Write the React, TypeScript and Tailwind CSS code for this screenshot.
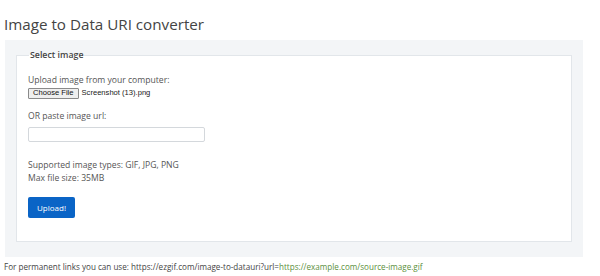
import React from "react";

export default function App() {
  return (
    <div className="w-[600px] h-[276px] bg-white overflow-hidden font-['Open_Sans',sans-serif] text-[#555]">
      <div className="pt-[14px] pl-[4px] h-[40px]">
        <h1 className="text-[15.2px] leading-[20px] text-[#444] font-normal">Image to Data URI converter</h1>
      </div>
      <div className="ml-[5px] w-[578px] bg-[#f3f5f7] pt-[9px] pb-[15px] px-[11px]">
        <fieldset className="border border-[#e2e6ea] bg-white pl-[11px] pr-[11px] pb-[23px] m-0">
          <legend className="ml-[1px] px-[1px] text-[8.8px] leading-[12px] text-[#444] font-semibold">Select image</legend>
          <div className="mt-[13px] text-[8.6px] leading-[13px]">Upload image from your computer:</div>
          <div className="h-[12px] flex items-center font-['Liberation_Sans',Arial,sans-serif] text-[7.6px] text-[#222]">
            <span className="h-[11px] px-[4px] flex items-center bg-[#efefef] border border-[#8a8a8a] rounded-[1px] text-[#111]">Choose File</span>
            <span className="ml-[3px]">Screenshot (13).png</span>
          </div>
          <div className="mt-[11px] text-[8.6px] leading-[13px]">OR paste image url:</div>
          <div className="mt-[4px] w-[177px] h-[15px] border border-[#d4d8dc] rounded-[2px]"></div>
          <div className="mt-[17px] text-[8.6px] leading-[13px]">Supported image types: GIF, JPG, PNG</div>
          <div className="text-[8.6px] leading-[13px]">Max file size: 35MB</div>
          <button className="mt-[12px] w-[47px] h-[21px] bg-[#0a64c6] text-white text-[8px] rounded-[2px] flex items-center justify-center">Upload!</button>
        </fieldset>
      </div>
      <div className="mt-[4px] pl-[4px] text-[8.1px] leading-[12px] text-[#444] whitespace-nowrap">
        For permanent links you can use: https://ezgif.com/image-to-datauri?url=<span className="text-[#5b8f3c]">https://example.com/source-image.gif</span>
      </div>
    </div>
  );
}
